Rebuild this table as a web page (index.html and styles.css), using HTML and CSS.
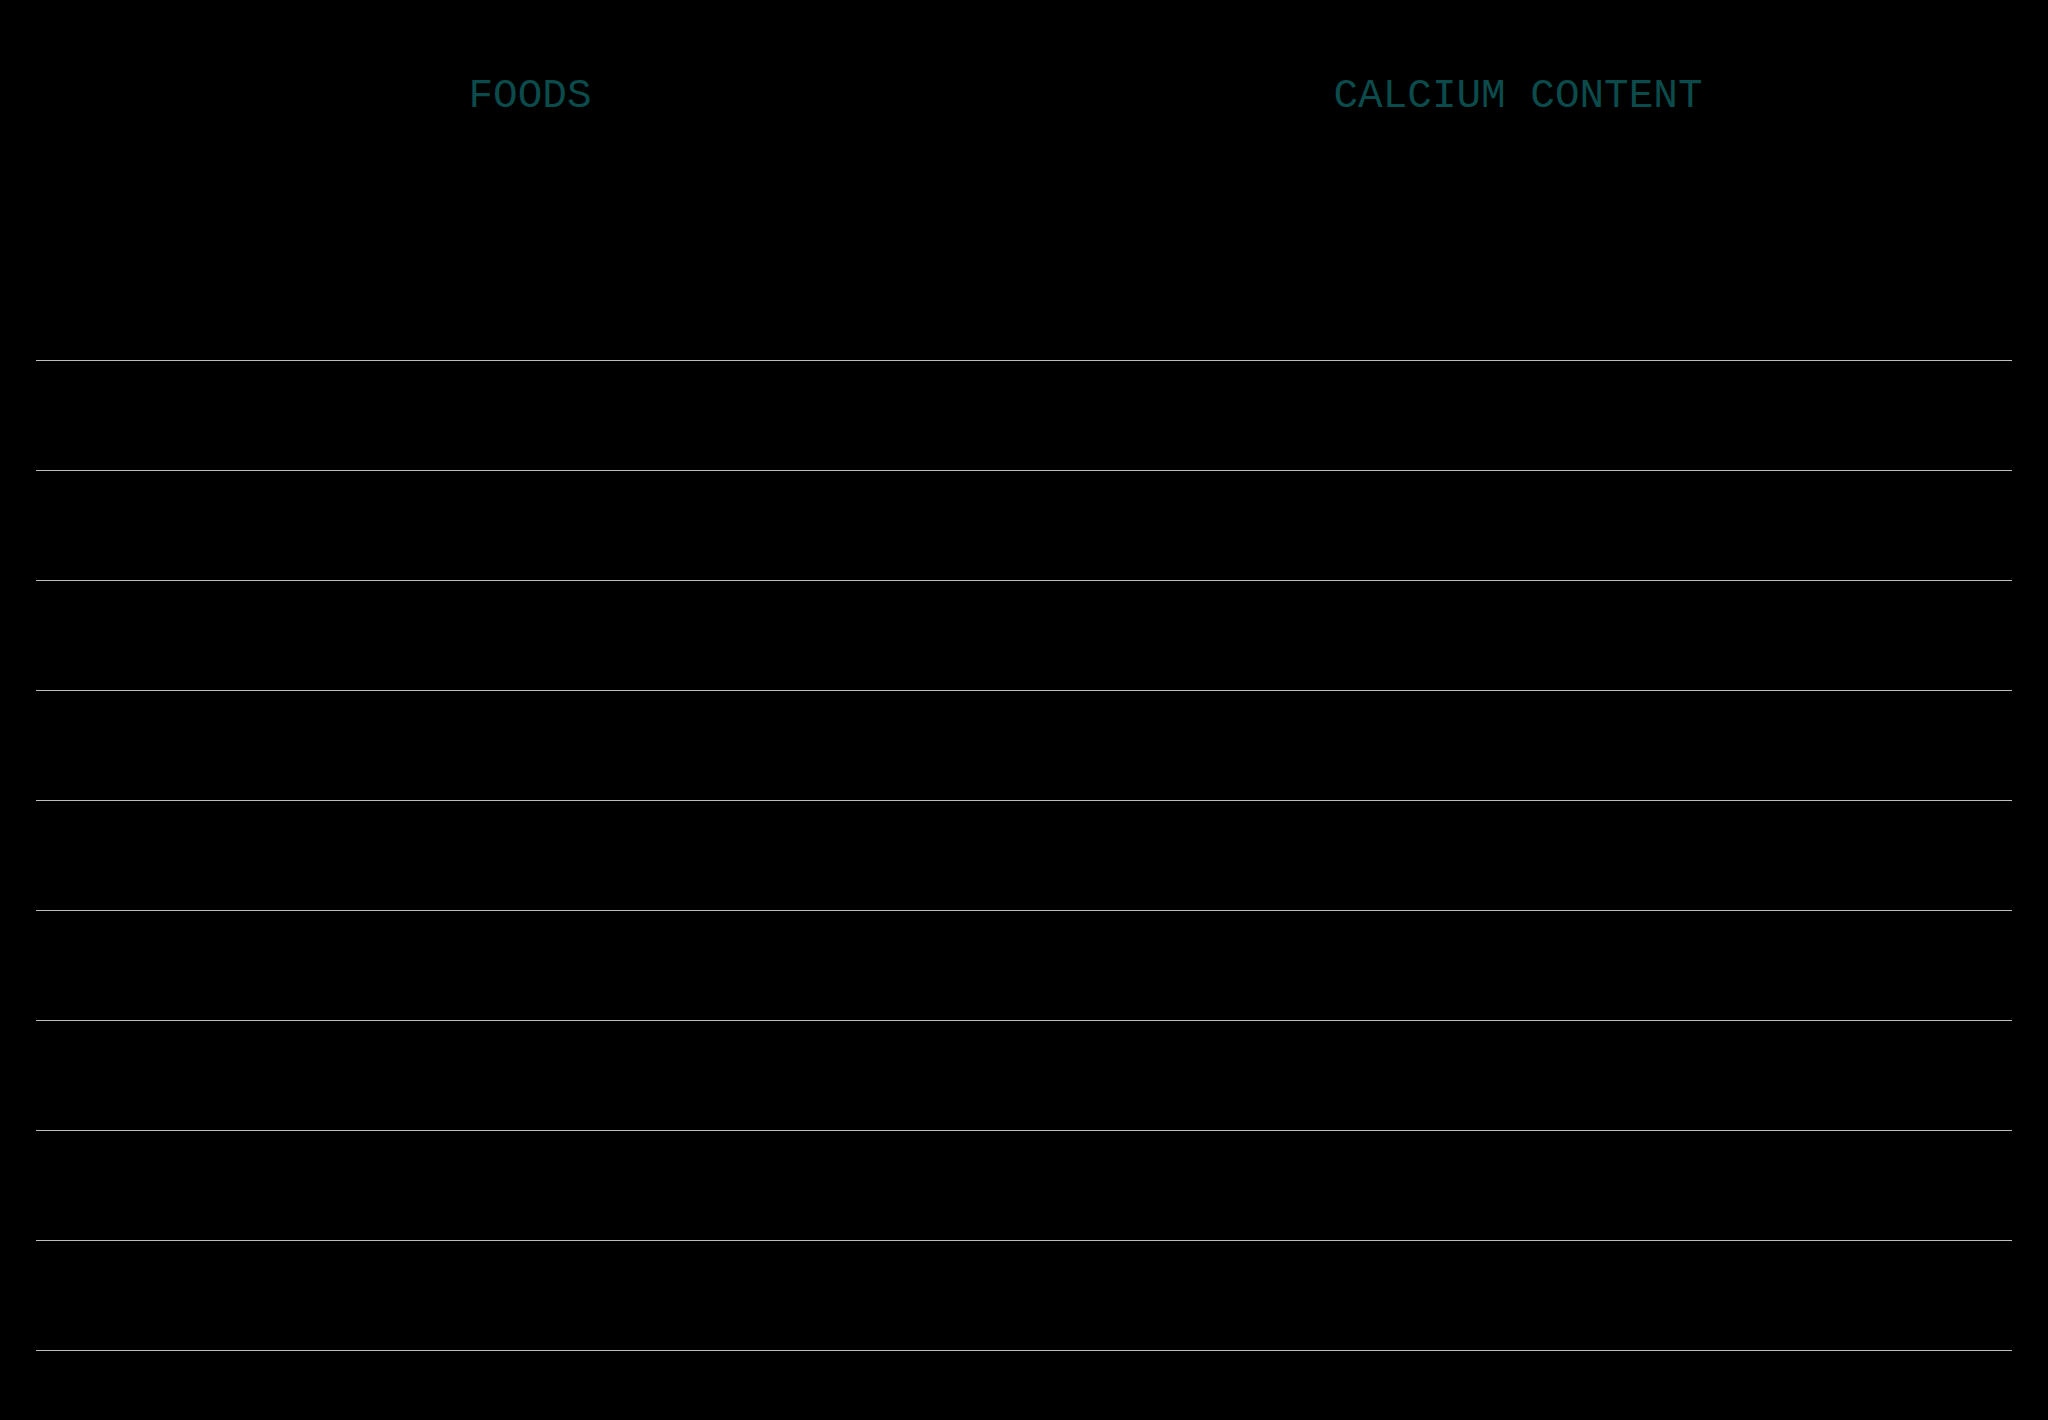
FILE: index.html
```html
<!DOCTYPE html>
<html lang="en">
<head>
<meta charset="utf-8">
<title>Calcium content of foods</title>
<link rel="stylesheet" href="styles.css">
</head>
<body>
<main class="sheet">
  <div class="head">
    <div class="head-cell">FOODS</div>
    <div class="head-cell">CALCIUM CONTENT</div>
  </div>
  <div class="rows">
    <div class="row"><div class="cell"></div><div class="cell"></div></div>
    <div class="row"><div class="cell"></div><div class="cell"></div></div>
    <div class="row"><div class="cell"></div><div class="cell"></div></div>
    <div class="row"><div class="cell"></div><div class="cell"></div></div>
    <div class="row"><div class="cell"></div><div class="cell"></div></div>
    <div class="row"><div class="cell"></div><div class="cell"></div></div>
    <div class="row"><div class="cell"></div><div class="cell"></div></div>
    <div class="row"><div class="cell"></div><div class="cell"></div></div>
    <div class="row"><div class="cell"></div><div class="cell"></div></div>
  </div>
</main>
</body>
</html>
```
FILE: styles.css
```css
html, body {
  margin: 0;
  padding: 0;
  background: #000;
}
body {
  width: 2048px;
  height: 1420px;
  overflow: hidden;
}
.sheet {
  padding: 0 36px;
}
.head {
  display: grid;
  grid-template-columns: 1fr 1fr;
  height: 360px;
  box-sizing: border-box;
  padding-top: 72px;
}
.head-cell {
  font-family: "Liberation Mono", "Courier New", monospace;
  font-size: 41px;
  line-height: 48px;
  color: #0c4b4b;
  text-align: center;
  align-self: start;
}
.rows {
  border-bottom: 1px solid #bdbdbd;
}
.row {
  display: grid;
  grid-template-columns: 1fr 1fr;
  height: 110px;
  box-sizing: border-box;
  border-top: 1px solid #bdbdbd;
}
```
